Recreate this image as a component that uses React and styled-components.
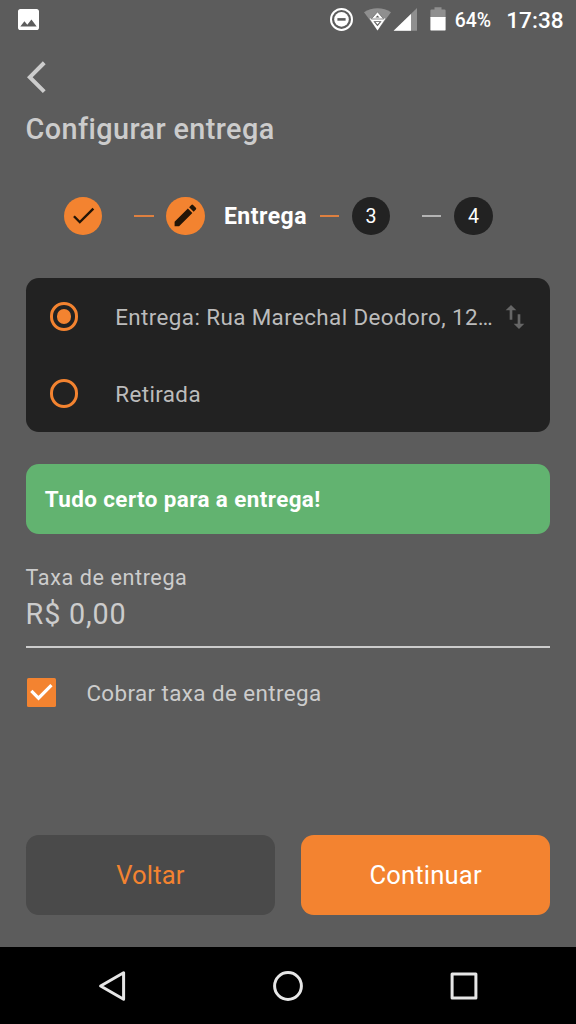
import React, { useState } from 'react'
import styled, { createGlobalStyle, css } from 'styled-components'

const GlobalStyle = createGlobalStyle`
  * {
    box-sizing: border-box;
  }
  body {
    margin: 0;
    background-color: #5c5c5c;
    font-family: Roboto, sans-serif;
    font-size: 22.4px;
    color: #cccccc;
  }
  button {
    border: none;
    padding: 0;
    background: none;
    font: inherit;
    color: inherit;
    cursor: pointer;
  }
  svg {
    display: block;
    flex: none;
  }
`
const Screen = styled.div`
  width: 576px;
  height: 1024px;
  display: flex;
  flex-direction: column;
  overflow: hidden;
`
const StatusBar = styled.header`
  height: 38.4px;
  display: flex;
  align-items: center;
  padding: 0 12.4px 0 18.4px;
  color: #ffffff;
  font-weight: 500;
  .status-icons {
    margin-left: auto;
    margin-right: 8px;
  }
`
const Battery = styled.span`
  width: 37px;
  margin-right: 14.5px;
  font-size: 19.4px;
  line-height: 38px;
  padding-top: 3px;
  white-space: nowrap;
`
const Clock = styled.span`
  font-size: 22.6px;
  line-height: 40px;
  padding-top: 3px;
  white-space: nowrap;
`
const Content = styled.main`
  flex: 1;
  display: flex;
  flex-direction: column;
  padding: 19.2px 25.6px 32px;
`
const BackButton = styled.button`
  width: 38.4px;
  height: 38.4px;
  margin-left: 1.4px;
`
const Title = styled.h1`
  margin: 16px 0 0;
  font-size: 28.8px;
  line-height: 34px;
  font-weight: 500;
  letter-spacing: 0.4px;
`
const Stepper = styled.div`
  height: 38.4px;
  margin-top: 50.6px;
  padding-left: 38.4px;
  display: flex;
  align-items: center;
`
const StepCircle = styled.div`
  width: 38.4px;
  height: 38.4px;
  flex: none;
  border-radius: 50%;
  display: flex;
  align-items: center;
  justify-content: center;
  font-size: 19.6px;
  line-height: 24px;
  padding-top: ${({ $done }) => ($done ? '0' : '2px')};
  color: #ffffff;
  background-color: ${({ $done }) => ($done ? '#f38330' : '#222222')};
`
const StepLabel = styled.div`
  width: 83.2px;
  margin-left: 19.2px;
  padding-top: 2px;
  font-size: 23px;
  font-weight: 700;
  letter-spacing: 0.48px;
  white-space: nowrap;
  color: #ffffff;
`
const StepLine = styled.div`
  width: 19.2px;
  height: 2px;
  flex: none;
  margin-right: 12.8px;
  margin-left: ${({ $near }) => ($near ? '12.8px' : '32px')};
  background-color: ${({ $done }) => ($done ? '#de8040' : '#b4b4b4')};
`
const OptionCard = styled.div`
  height: 153.6px;
  margin-top: 43px;
  border-radius: 12.8px;
  background-color: #222222;
`
const Option = styled.div`
  height: 76.8px;
  display: flex;
  align-items: center;
  padding: 0 19.2px 0 24px;
  color: #bcbcbc;
  cursor: pointer;
  svg {
    margin-top: 1.4px;
  }
`
const Radio = styled.span`
  width: 28.8px;
  height: 28.8px;
  flex: none;
  margin-right: 36.8px;
  border: 3px solid #f38330;
  border-radius: 50%;
  display: flex;
  align-items: center;
  justify-content: center;
  ${({ $checked }) => $checked && css`
    &::after {
      content: '';
      width: 14.4px;
      height: 14.4px;
      border-radius: 50%;
      background-color: #f38330;
    }
  `}
`
const OptionText = styled.span`
  flex: 1;
  padding-top: 2px;
  white-space: nowrap;
  letter-spacing: 0.4px;
`
const Notice = styled.div`
  height: 70.4px;
  margin-top: 32px;
  padding-left: 19.2px;
  display: flex;
  align-items: center;
  border-radius: 12.8px;
  font-weight: 700;
  letter-spacing: 0.42px;
  color: #ffffff;
  background-color: #62b370;
`
const Field = styled.label`
  display: block;
  height: 84px;
  margin-top: 29.6px;
  border-bottom: 2px solid #cccccc;
  .field-label {
    display: block;
    font-size: 21.6px;
    line-height: 26px;
    padding-top: 1px;
    letter-spacing: 0.58px;
  }
  .field-value {
    display: block;
    font-size: 28.8px;
    line-height: 34px;
    margin-top: 6px;
    letter-spacing: 0.8px;
  }
`
const CheckRow = styled.div`
  display: flex;
  align-items: center;
  height: 38.4px;
  margin-top: 25.6px;
  padding-left: 1.6px;
  letter-spacing: 0.4px;
  cursor: pointer;
  .check-label {
    padding-top: 2px;
  }
`
const CheckBox = styled.span`
  width: 28.8px;
  height: 28.8px;
  margin-right: 30.4px;
  border-radius: 1.6px;
  background-color: ${({ $checked }) => ($checked ? '#f38330' : 'transparent')};
`
const Actions = styled.div`
  margin-top: auto;
  display: grid;
  grid-template-columns: 1fr 1fr;
  gap: 25.6px;
`
const ActionButton = styled.button`
  && {
    height: 80px;
    border-radius: 12.8px;
    font-size: 25.6px;
    letter-spacing: 0.16px;
    color: ${({ $primary }) => ($primary ? '#ffffff' : '#f38330')};
    background-color: ${({ $primary }) => ($primary ? '#f38330' : '#4a4a4a')};
  }
`
const NavBar = styled.nav`
  height: 76.8px;
  display: grid;
  grid-template-columns: repeat(3, 1fr);
  align-items: center;
  justify-items: center;
  padding: 0 24px;
  background-color: #000000;
`

const OPTIONS = [
  { id: 'delivery', title: 'Entrega: Rua Marechal Deodoro, 12…', sortable: true },
  { id: 'pickup', title: 'Retirada' }
]

function StatusIcons () {
  return (
    <svg className='status-icons' width='118' height='38' viewBox='329 0 118 38'>
      <circle cx='341.5' cy='19.4' r='10.5' fill='none' stroke='#fff' strokeWidth='2' />
      <circle cx='341.5' cy='19.4' r='7.3' fill='#fff' />
      <path d='M337.4 19.4h8.2' stroke='#5c5c5c' strokeWidth='2.6' />
      <path d='M364 12.2C371.5 6.8 383.5 6.8 391 12.2L377.5 30.6z' fill='#8f8f8f' />
      <path d='M369.6 18.6h15.8L377.5 30.6z' fill='#fff' />
      <path d='M377.5 11.8l6.2 7.2h-12.4z' fill='#fff' stroke='#6c6c6c' strokeWidth='.8' />
      <path d='M377.5 15.4l2 2.2h-4z' fill='#5c5c5c' />
      <path d='M373.4 21.2h8.2l-4.1 5z' fill='#5c5c5c' />
      <path d='M375.4 22h4.2l-2.1 2.6z' fill='#fff' />
      <path d='M417 8v22.8h-23.4z' fill='#8f8f8f' />
      <path d='M411 13.9v16.9h-17.4z' fill='#fff' />
      <path d='M430.4 10.4q0-1 1-1h3.1V7.2h7v2.2h3.1q1 0 1 1V18h-15.2z' fill='#8f8f8f' />
      <path d='M430.4 17h15.2v12.4q0 1.2-1.2 1.2h-12.8q-1.2 0-1.2-1.2z' fill='#fff' />
    </svg>
  )
}

function App () {
  const [selected, setSelected] = useState('delivery')
  const [charge, setCharge] = useState(true)
  return (
    <Screen>
      <GlobalStyle />
      <StatusBar>
        <svg width='21' height='21' viewBox='3 3 18 18' fill='#fff'>
          <path d='M21 19V5c0-1.1-.9-2-2-2H5c-1.1 0-2 .9-2 2v14c0 1.1.9 2 2 2h14c1.1 0 2-.9 2-2zM8.5 13.5l2.5 3.01L14.5 12l4.5 6H5l3.5-4.5z' />
        </svg>
        <StatusIcons />
        <Battery>64%</Battery>
        <Clock>17:38</Clock>
      </StatusBar>
      <Content>
        <BackButton aria-label='Voltar'>
          <svg width='38.4' height='38.4' viewBox='0 0 24 24' fill='#cccccc'>
            <path d='M11.67 3.87L9.9 2.1 0 12l9.9 9.9 1.77-1.77L3.54 12z' />
          </svg>
        </BackButton>
        <Title>Configurar entrega</Title>
        <Stepper>
          <StepCircle $done>
            <svg width='28.8' height='28.8' viewBox='0 0 24 24' fill='#241507'>
              <path d='M9 16.17L4.83 12l-1.42 1.41L9 19 21 7l-1.41-1.41z' />
            </svg>
          </StepCircle>
          <StepLine $done />
          <StepCircle $done>
            <svg width='28.8' height='28.8' viewBox='0 0 24 24' fill='#241507'>
              <path d='M3 17.25V21h3.75L17.81 9.94l-3.75-3.75L3 17.25zM20.71 7.04a1 1 0 0 0 0-1.41l-2.34-2.34a1 1 0 0 0-1.41 0l-1.83 1.83 3.75 3.75 1.83-1.83z' />
            </svg>
          </StepCircle>
          <StepLabel>Entrega</StepLabel>
          <StepLine $done $near />
          <StepCircle>3</StepCircle>
          <StepLine />
          <StepCircle>4</StepCircle>
        </Stepper>
        <OptionCard>
          {
            OPTIONS.map(
              option => (
                <Option key={option.id} onClick={() => setSelected(option.id)}>
                  <Radio $checked={selected === option.id} />
                  <OptionText>{option.title}</OptionText>
                  {option.sortable && (
                    <svg width='32' height='32' viewBox='0 0 24 24' fill='#666666'>
                      <path d='M9 3L5 6.99h3V14h2V6.99h3L9 3zm7 14.01V10h-2v7.01h-3L15 21l4-3.99h-3z' />
                    </svg>
                  )}
                </Option>
              )
            )
          }
        </OptionCard>
        <Notice>Tudo certo para a entrega!</Notice>
        <Field>
          <span className='field-label'>Taxa de entrega</span>
          <span className='field-value'>R$ 0,00</span>
        </Field>
        <CheckRow onClick={() => setCharge(!charge)}>
          <CheckBox $checked={charge}>
            <svg width='28.8' height='28.8' viewBox='0 0 18 18' fill='none' stroke='#fff' strokeWidth='2'>
              <path d='M2.7 8.1l4.5 4.5 8.1-8.1' />
            </svg>
          </CheckBox>
          <span className='check-label'>Cobrar taxa de entrega</span>
        </CheckRow>
        <Actions>
          <ActionButton>Voltar</ActionButton>
          <ActionButton $primary>Continuar</ActionButton>
        </Actions>
      </Content>
      <NavBar>
        <svg width='32' height='32' viewBox='0 0 32 32' fill='none' stroke='#e6e6e6' strokeWidth='3' strokeLinejoin='round'>
          <path d='M27.6 2.8v26.4L4.6 16z' />
        </svg>
        <svg width='32' height='32' viewBox='0 0 32 32' fill='none' stroke='#e6e6e6' strokeWidth='3'>
          <circle cx='16' cy='16' r='13.4' />
        </svg>
        <svg width='32' height='32' viewBox='0 0 32 32' fill='none' stroke='#e6e6e6' strokeWidth='3' strokeLinejoin='round'>
          <path d='M4.1 4.1h23.8v23.8H4.1z' />
        </svg>
      </NavBar>
    </Screen>
  )
}

export default App
